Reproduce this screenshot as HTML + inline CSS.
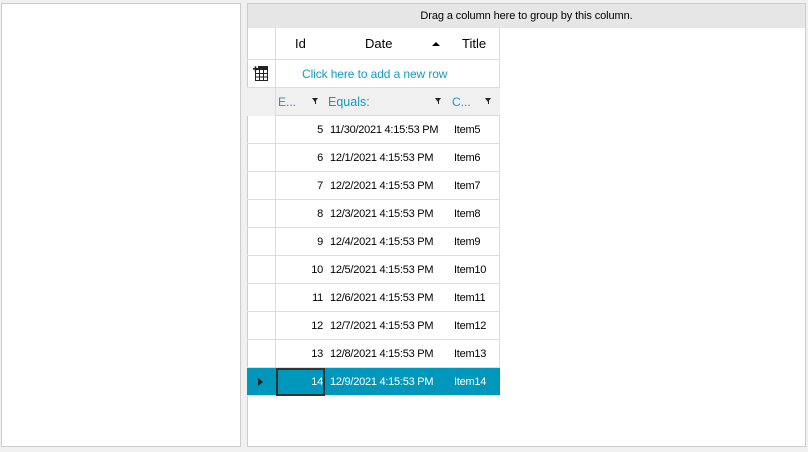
<!DOCTYPE html>
<html><head><meta charset="utf-8"><style>
*{box-sizing:border-box;margin:0;padding:0}
body{width:808px;height:452px;background:#f0f0f0;position:relative;overflow:hidden;font-family:"Liberation Sans",sans-serif;font-size:11px;letter-spacing:-0.25px;color:#000}
.a{position:absolute}
.p{background:#fff;border:1px solid #cdcdcd}
.row{position:absolute;left:247px;width:253px;height:28px;border-bottom:1px solid #dcdcdc}
.c{position:absolute;top:0;height:27px;line-height:28px;white-space:nowrap}
.ind{left:0;width:29px;border-right:1px solid #dcdcdc;height:28px}
.blue{color:#119bc6}
</style></head><body>
<div class="a p" style="left:1px;top:3px;width:240px;height:444px"></div>
<div class="a p" style="left:247px;top:3px;width:559px;height:444px"></div>
<div class="a" style="left:248px;top:4px;width:557px;height:24px;background:#e6e6e6;text-align:center;line-height:24px;font-size:11px;letter-spacing:-0.1px">Drag a column here to group by this column.</div>
<div class="a" style="left:499px;top:28px;width:1px;height:368px;background:#dcdcdc"></div>
<!-- header -->
<div class="row" style="top:28px;height:32px">
<div class="c ind" style="height:31px"></div>
<div class="c" style="left:48px;line-height:32px;font-size:13px;letter-spacing:0">Id</div>
<div class="c" style="left:118px;line-height:32px;font-size:13px;letter-spacing:0">Date</div>
<div class="c" style="left:185px;top:14px;width:0;height:0;border-left:4px solid transparent;border-right:4px solid transparent;border-bottom:4px solid #000"></div>
<div class="c" style="left:215px;line-height:32px;font-size:13px;letter-spacing:0">Title</div>
</div>
<!-- new row -->
<div class="row" style="top:60px;height:28px">
<div class="c ind">
<svg width="28" height="27" viewBox="0 0 28 27" style="position:absolute;left:0;top:0">
<g fill="#222"><rect x="6" y="8" width="5" height="1.6"/><rect x="7.7" y="6.3" width="1.6" height="5"/><rect x="11" y="6" width="10" height="3"/></g>
<g fill="none" stroke="#222" stroke-width="1"><rect x="8.5" y="9.5" width="12" height="11"/><path d="M8.5 13.5h12M8.5 17h12M12.5 9.5v11M16.5 9.5v11"/></g>
</svg></div>
<div class="c blue" style="left:55px;font-size:12px;letter-spacing:-0.1px">Click here to add a new row</div>
</div>
<!-- filter row -->
<div class="row" style="top:88px;height:28px;background:#f0f0f0">
<div class="c ind" style="background:#f0f0f0"></div>
<div class="c blue" style="left:31px;font-size:12px;letter-spacing:0">E...</div>
<div class="c" style="left:65px;top:10px;width:0;height:0;border-left:3.5px solid transparent;border-right:3.5px solid transparent;border-top:4px solid #222"></div>
<div class="c" style="left:68px;top:13px;width:1px;height:3px;background:#222"></div>
<div class="c blue" style="left:81px;font-size:12.5px;letter-spacing:0">Equals:</div>
<div class="c" style="left:188px;top:10px;width:0;height:0;border-left:3.5px solid transparent;border-right:3.5px solid transparent;border-top:4px solid #222"></div>
<div class="c" style="left:191px;top:13px;width:1px;height:3px;background:#222"></div>
<div class="c blue" style="left:205px;font-size:12px;letter-spacing:0">C...</div>
<div class="c" style="left:238px;top:10px;width:0;height:0;border-left:3.5px solid transparent;border-right:3.5px solid transparent;border-top:4px solid #222"></div>
<div class="c" style="left:241px;top:13px;width:1px;height:3px;background:#222"></div>
</div>
<!-- data rows -->
<div class="row" style="top:116px"><div class="c ind"></div><div class="c" style="left:29px;width:47px;text-align:right">5</div><div class="c" style="left:83px">11/30/2021 4:15:53 PM</div><div class="c" style="left:207px">Item5</div></div>
<div class="row" style="top:144px"><div class="c ind"></div><div class="c" style="left:29px;width:47px;text-align:right">6</div><div class="c" style="left:83px">12/1/2021 4:15:53 PM</div><div class="c" style="left:207px">Item6</div></div>
<div class="row" style="top:172px"><div class="c ind"></div><div class="c" style="left:29px;width:47px;text-align:right">7</div><div class="c" style="left:83px">12/2/2021 4:15:53 PM</div><div class="c" style="left:207px">Item7</div></div>
<div class="row" style="top:200px"><div class="c ind"></div><div class="c" style="left:29px;width:47px;text-align:right">8</div><div class="c" style="left:83px">12/3/2021 4:15:53 PM</div><div class="c" style="left:207px">Item8</div></div>
<div class="row" style="top:228px"><div class="c ind"></div><div class="c" style="left:29px;width:47px;text-align:right">9</div><div class="c" style="left:83px">12/4/2021 4:15:53 PM</div><div class="c" style="left:207px">Item9</div></div>
<div class="row" style="top:256px"><div class="c ind"></div><div class="c" style="left:29px;width:47px;text-align:right">10</div><div class="c" style="left:83px">12/5/2021 4:15:53 PM</div><div class="c" style="left:207px">Item10</div></div>
<div class="row" style="top:284px"><div class="c ind"></div><div class="c" style="left:29px;width:47px;text-align:right">11</div><div class="c" style="left:83px">12/6/2021 4:15:53 PM</div><div class="c" style="left:207px">Item11</div></div>
<div class="row" style="top:312px"><div class="c ind"></div><div class="c" style="left:29px;width:47px;text-align:right">12</div><div class="c" style="left:83px">12/7/2021 4:15:53 PM</div><div class="c" style="left:207px">Item12</div></div>
<div class="row" style="top:340px"><div class="c ind"></div><div class="c" style="left:29px;width:47px;text-align:right">13</div><div class="c" style="left:83px">12/8/2021 4:15:53 PM</div><div class="c" style="left:207px">Item13</div></div>
<div class="row" style="top:368px;background:#0097bd;color:#fff">
<div class="c ind" style="border-right:none"></div>
<div class="c" style="left:11px;top:10px;width:0;height:0;border-top:4px solid transparent;border-bottom:4px solid transparent;border-left:5px solid #222"></div>
<div class="c" style="left:29px;width:49px;height:28px;border:2px solid #333"></div>
<div class="c" style="left:29px;width:47px;text-align:right">14</div><div class="c" style="left:83px">12/9/2021 4:15:53 PM</div><div class="c" style="left:207px">Item14</div></div>
</body></html>
